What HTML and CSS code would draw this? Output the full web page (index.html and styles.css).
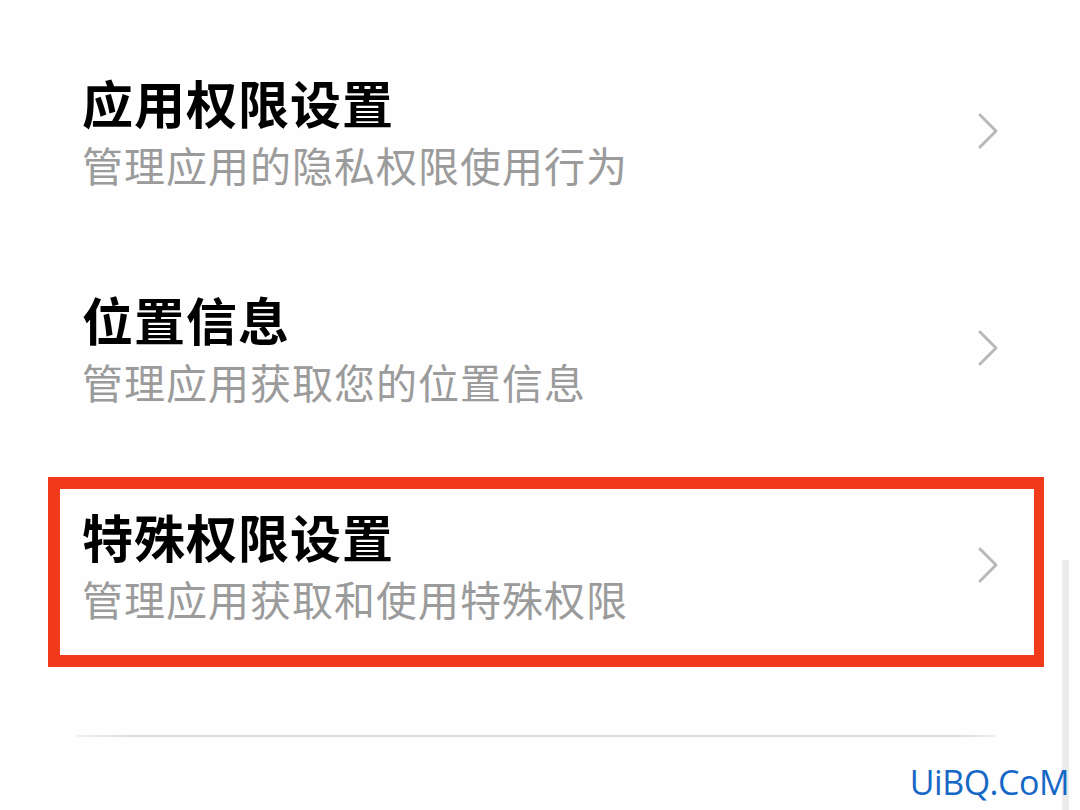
FILE: index.html
```html
<!DOCTYPE html>
<html lang="zh-CN">
<head>
<meta charset="utf-8">
<title>权限设置</title>
<link rel="stylesheet" href="styles.css">
</head>
<body>
<div class="page">
  <div class="list">
    <div class="row">
      <div class="text">
        <div class="title">应用权限设置</div>
        <div class="sub">管理应用的隐私权限使用行为</div>
      </div>
      <svg class="chev" width="22" height="38" viewBox="0 0 22 38"><polyline points="3,3 19,19 3,35" fill="none" stroke="#b8b8b8" stroke-width="3" stroke-linecap="round" stroke-linejoin="round"/></svg>
    </div>
    <div class="row">
      <div class="text">
        <div class="title">位置信息</div>
        <div class="sub">管理应用获取您的位置信息</div>
      </div>
      <svg class="chev" width="22" height="38" viewBox="0 0 22 38"><polyline points="3,3 19,19 3,35" fill="none" stroke="#b8b8b8" stroke-width="3" stroke-linecap="round" stroke-linejoin="round"/></svg>
    </div>
    <div class="row row-marked">
      <div class="text">
        <div class="title">特殊权限设置</div>
        <div class="sub">管理应用获取和使用特殊权限</div>
      </div>
      <svg class="chev" width="22" height="38" viewBox="0 0 22 38"><polyline points="3,3 19,19 3,35" fill="none" stroke="#b8b8b8" stroke-width="3" stroke-linecap="round" stroke-linejoin="round"/></svg>
      <div class="mark"></div>
    </div>
  </div>
  <div class="sep"></div>
  <div class="scrollbar"></div>
  <div class="watermark">UiBQ.CoM</div>
</div>
</body>
</html>
```
FILE: styles.css
```css
html, body {
  margin: 0;
  padding: 0;
  background: #fefefe;
}
.page {
  position: relative;
  width: 1080px;
  height: 810px;
  overflow: hidden;
  font-family: "Noto Sans CJK SC", "Noto Sans", sans-serif;
  padding-top: 22px;
  box-sizing: border-box;
}
.list {
  display: flex;
  flex-direction: column;
}
.row {
  position: relative;
  height: 217px;
  display: flex;
  align-items: center;
  justify-content: space-between;
  padding: 0 83px 0 82px;
}
.text {
  display: flex;
  flex-direction: column;
}
.title {
  font-size: 51px;
  line-height: 66px;
  font-weight: 700;
  color: #000;
  letter-spacing: 1px;
}
.sub {
  font-size: 41px;
  line-height: 58px;
  color: #9b9b9b;
  letter-spacing: 1px;
}
.chev {
  display: block;
  margin-right: -2px;
}
.mark {
  position: absolute;
  left: 48px;
  top: 21px;
  width: 996px;
  height: 190px;
  box-sizing: border-box;
  border: 12px solid #f13a19;
  border-right-width: 10px;
}
.sep {
  margin: 62px 85px 0 76px;
  height: 2px;
  background: linear-gradient(to right, #f2f2f2, #dcdcdc 6%, #dcdcdc 96%, #eeeeee);
}
.scrollbar {
  position: absolute;
  right: 11px;
  top: 560px;
  width: 7px;
  bottom: 0;
  background: #ebebeb;
}
.watermark {
  position: absolute;
  right: 11px;
  top: 760px;
  font-family: "Open Sans", "DejaVu Sans", sans-serif;
  font-size: 34px;
  line-height: 44px;
  color: #1567c6;
  letter-spacing: -0.5px;
}
```
